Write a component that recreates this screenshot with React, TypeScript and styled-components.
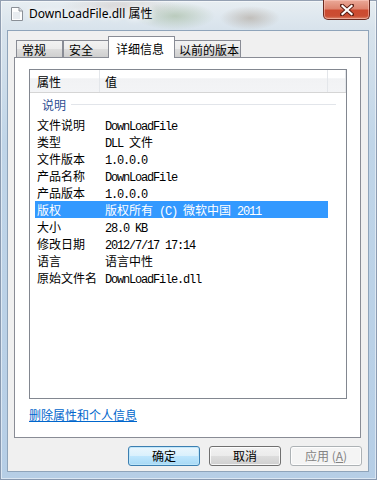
import React from "react";
import styled, { createGlobalStyle } from "styled-components";

const GlobalStyle = createGlobalStyle`
  html, body { margin: 0; padding: 0; }
  body {
    width: 377px;
    height: 480px;
    overflow: hidden;
    font-family: "Noto Sans CJK SC", sans-serif;
  }
`;

const Frame = styled.div`
  width: 377px;
  height: 480px;
  box-sizing: border-box;
  display: flex;
  flex-direction: column;
  padding: 0 8px 8px 7px;
  background:
    radial-gradient(ellipse 40px 14px at 175px 16px, rgba(150, 175, 140, 0.5), transparent),
    radial-gradient(ellipse 30px 12px at 250px 18px, rgba(150, 130, 110, 0.4), transparent),
    radial-gradient(ellipse 60px 12px at 120px 6px, rgba(190, 170, 160, 0.3), transparent),
    linear-gradient(180deg, #e8eef2 0%, #d8e3ec 6%, #c0d5e8 30%, #b6cee6 100%);
  box-shadow: inset 0 0 0 1px rgba(70, 90, 120, 0.55), inset 0 0 0 2px rgba(255, 255, 255, 0.5);
`;

const TitleBar = styled.div`
  height: 30px;
  display: flex;
  align-items: flex-start;
  padding-left: 4px;
`;

const TitleText = styled.div`
  margin-top: 6px;
  margin-left: 6px;
  font-family: "Noto Sans", "Noto Sans CJK SC", sans-serif;
  font-size: 12px;
  line-height: 16px;
  color: #000;
  text-shadow: 0 0 6px #fff, 0 0 10px #fff;
`;

const DocIcon = styled.svg`
  margin-top: 7px;
`;

const CloseButton = styled.div`
  margin-left: auto;
  margin-right: -1px;
  width: 47px;
  height: 20px;
  box-sizing: border-box;
  border: 1px solid #6b2a20;
  border-top: none;
  border-radius: 0 0 5px 5px;
  background: linear-gradient(180deg, #eaa998 0%, #de8570 45%, #cc4a30 55%, #cb4e33 85%, #dd8b72 100%);
  box-shadow: inset 0 0 0 1px rgba(255, 210, 200, 0.5);
  display: flex;
  align-items: center;
  justify-content: center;
`;

const Client = styled.div`
  flex: 1;
  box-sizing: border-box;
  background: #f0f0f0;
  border: 1px solid #8fa4ba;
  padding: 5px 7px 0 6px;
  display: flex;
  flex-direction: column;
`;

const TabStrip = styled.div`
  height: 22px;
  margin-bottom: -1px;
  display: flex;
  align-items: flex-end;
  padding-left: 2px;
  position: relative;
  z-index: 1;
`;

const Tab = styled.div<{ $w: number; $active?: boolean }>`
  width: ${(p) => p.$w}px;
  box-sizing: border-box;
  height: ${(p) => (p.$active ? 22 : 18)}px;
  margin: ${(p) => (p.$active ? "0 -2px" : "0")};
  position: relative;
  z-index: ${(p) => (p.$active ? 2 : 1)};
  border: 1px solid #898c95;
  border-bottom: ${(p) => (p.$active ? "none" : "1px solid #898c95")};
  background: ${(p) =>
    p.$active ? "#ffffff" : "linear-gradient(180deg, #f2f2f2 0%, #ebebeb 50%, #dddddd 51%, #cfcfcf 100%)"};
  padding-left: ${(p) => (p.$active ? 7 : 5)}px;
  padding-top: ${(p) => (p.$active ? 3 : 0)}px;
  font-size: 12px;
  line-height: 17px;
  color: #000;
`;

const Panel = styled.div`
  height: 381px;
  box-sizing: border-box;
  background: #fff;
  border: 1px solid #898c95;
  padding: 11px 13px 0 14px;
  display: flex;
  flex-direction: column;
`;

const ListView = styled.div`
  height: 330px;
  box-sizing: border-box;
  border: 1px solid #828790;
  display: flex;
  flex-direction: column;
`;

const Header = styled.div`
  height: 23px;
  box-sizing: border-box;
  display: flex;
  background: linear-gradient(180deg, #ffffff 0%, #ffffff 35%, #f1f2f4 40%, #f3f4f6 100%);
  border-bottom: 1px solid #d5d5d5;
`;

const HeaderCell = styled.div<{ $w?: number; $pad: number }>`
  width: ${(p) => (p.$w ? `${p.$w}px` : "auto")};
  flex: ${(p) => (p.$w ? "none" : 1)};
  box-sizing: border-box;
  padding-left: ${(p) => p.$pad}px;
  border-right: 1px solid #e3e6ea;
  font-size: 12px;
  line-height: 23px;
  color: #000;
`;

const GroupHeader = styled.div`
  height: 23px;
  display: flex;
  align-items: center;
  padding-left: 12px;
  padding-right: 10px;
  gap: 5px;
  font-size: 12px;
  color: #2d4e93;
`;

const GroupLine = styled.div`
  flex: 1;
  height: 1px;
  background: #e2e5ea;
`;

const Row = styled.div<{ $selected?: boolean }>`
  display: grid;
  grid-template-columns: 68px 1fr;
  width: 293px;
  height: 17px;
  margin-left: 5px;
  padding-left: 2px;
  box-sizing: border-box;
  background: ${(p) => (p.$selected ? "#3399ff" : "transparent")};
  color: ${(p) => (p.$selected ? "#fff" : "#000")};
  font-size: 12px;
  line-height: 17px;
  white-space: nowrap;
`;

const Ascii = styled.span`
  font-family: "Liberation Mono", monospace;
  font-size: 12px;
  letter-spacing: -1.2px;
`;

const Link = styled.a`
  margin-top: 8px;
  font-size: 12px;
  line-height: 16px;
  color: #0066cc;
  text-decoration: underline;
  align-self: flex-start;
`;

const ButtonRow = styled.div`
  margin-top: 8px;
  display: flex;
  justify-content: flex-end;
  gap: 9px;
  margin-right: -1px;
`;

const Button = styled.div<{ $variant?: "default" | "disabled" }>`
  width: 72px;
  height: 20px;
  box-sizing: border-box;
  border-radius: 3px;
  border: 1px solid
    ${(p) => (p.$variant === "default" ? "#3c7fb1" : p.$variant === "disabled" ? "#adb2b5" : "#707070")};
  background: ${(p) =>
    p.$variant === "disabled"
      ? "#f4f4f4"
      : p.$variant === "default"
        ? "linear-gradient(180deg, #eaf6fd 0%, #d9f0fc 50%, #bee6fd 51%, #a7d9f5 100%)"
        : "linear-gradient(180deg, #f2f2f2 0%, #ebebeb 50%, #dddddd 51%, #cfcfcf 100%)"};
  box-shadow: inset 0 0 0 1px
    ${(p) => (p.$variant === "default" ? "rgba(190, 230, 250, 0.9)" : "rgba(255, 255, 255, 0.8)")};
  color: ${(p) => (p.$variant === "disabled" ? "#838383" : "#000")};
  font-size: 12px;
  line-height: 18px;
  text-align: center;
`;

const rows: { label: string; value: React.ReactNode; selected?: boolean }[] = [
  { label: "文件说明", value: <Ascii>DownLoadFile</Ascii> },
  { label: "类型", value: <><Ascii>DLL </Ascii>文件</> },
  { label: "文件版本", value: <Ascii>1.0.0.0</Ascii> },
  { label: "产品名称", value: <Ascii>DownLoadFile</Ascii> },
  { label: "产品版本", value: <Ascii>1.0.0.0</Ascii> },
  {
    label: "版权",
    value: <>版权所有<Ascii> (C) </Ascii>微软中国<Ascii> 2011</Ascii></>,
    selected: true,
  },
  { label: "大小", value: <Ascii>28.0 KB</Ascii> },
  { label: "修改日期", value: <Ascii>2012/7/17 17:14</Ascii> },
  { label: "语言", value: "语言中性" },
  { label: "原始文件名", value: <Ascii>DownLoadFile.dll</Ascii> },
];

const App: React.FC = () => {
  return (
    <Frame>
      <GlobalStyle />
      <TitleBar>
        <DocIcon width="12" height="14" viewBox="0 0 12 14">
          <path d="M0.5 0.5 H8 L11.5 4 V13.5 H0.5 Z" fill="#fdfdfd" stroke="#8a8f96" />
          <path d="M8 0.5 V4 H11.5" fill="#dfe3e8" stroke="#8a8f96" />
          <rect x="2" y="5" width="7" height="7" fill="#e8ecf0" />
        </DocIcon>
        <TitleText>DownLoadFile.dll 属性</TitleText>
        <CloseButton>
          <svg width="14" height="12" viewBox="0 0 14 12">
            <path d="M2 1.5 L12 10.5 M12 1.5 L2 10.5" stroke="#5a1e14" strokeWidth="4" strokeLinecap="square" />
            <path d="M2.5 2 L11.5 10 M11.5 2 L2.5 10" stroke="#ffffff" strokeWidth="2.2" strokeLinecap="square" />
          </svg>
        </CloseButton>
      </TitleBar>
      <Client>
        <TabStrip>
          <Tab $w={47}>常规</Tab>
          <Tab $w={47}>安全</Tab>
          <Tab $w={67} $active>详细信息</Tab>
          <Tab $w={68}>以前的版本</Tab>
        </TabStrip>
        <Panel>
          <ListView>
            <Header>
              <HeaderCell $w={70} $pad={7}>属性</HeaderCell>
              <HeaderCell $w={228} $pad={5}>值</HeaderCell>
              <HeaderCell $pad={0} />
            </Header>
            <GroupHeader>
              说明
              <GroupLine />
            </GroupHeader>
            {rows.map((r) => (
              <Row key={r.label} $selected={r.selected}>
                <span>{r.label}</span>
                <span>{r.value}</span>
              </Row>
            ))}
          </ListView>
          <Link>删除属性和个人信息</Link>
        </Panel>
        <ButtonRow>
          <Button $variant="default">确定</Button>
          <Button>取消</Button>
          <Button $variant="disabled">
            应用 (<u>A</u>)
          </Button>
        </ButtonRow>
      </Client>
    </Frame>
  );
};

export default App;
